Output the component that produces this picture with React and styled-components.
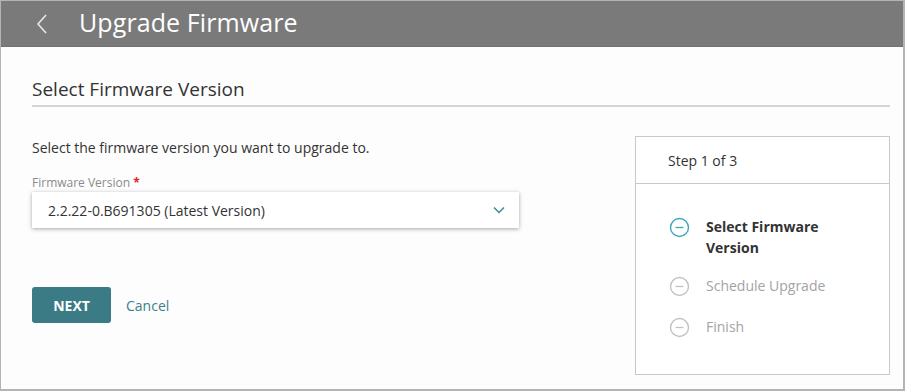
import React from "react";
import styled, { createGlobalStyle } from "styled-components";

const Global = createGlobalStyle`
  html, body { margin: 0; padding: 0; background: #fff; }
  body { font-family: "Open Sans", "Noto Sans", sans-serif; }
  * { box-sizing: border-box; }
`;

const Frame = styled.div`
  width: 905px;
  height: 391px;
  border: 1px solid #b4b4b4;
  border-right-width: 2px;
  border-bottom-width: 2px;
  background: #fdfdfd;
  display: flex;
  flex-direction: column;
  overflow: hidden;
`;

const Header = styled.header`
  height: 46px;
  background: #7a7a7a;
  border-bottom: 1px solid #717171;
  display: flex;
  align-items: center;
  padding-left: 34px;
  gap: 26px;
`;

const BackButton = styled.button`
  border: 0;
  background: none;
  padding: 0;
  width: 18px;
  height: 22px;
  display: flex;
  align-items: center;
  cursor: pointer;
`;

const Title = styled.h1`
  margin: 0;
  font-size: 25px;
  font-weight: 400;
  color: #fff;
  letter-spacing: 0.1px;
  line-height: 1;
  padding-bottom: 2px;
`;

const Body = styled.main`
  flex: 1;
  padding: 29px 13px 0 31px;
  display: flex;
  flex-direction: column;
`;

const SectionTitle = styled.h2`
  margin: 0;
  font-size: 19px;
  font-weight: 400;
  color: #333;
  line-height: 26px;
  padding-bottom: 3px;
  border-bottom: 2px solid #d4d4d4;
`;

const Content = styled.div`
  display: flex;
  justify-content: space-between;
  padding-top: 29px;
`;

const FormCol = styled.div`
  width: 488px;
  display: flex;
  flex-direction: column;
  padding-top: 2px;
`;

const Description = styled.p`
  margin: 0;
  font-size: 14px;
  color: #333;
  line-height: 20px;
`;

const Label = styled.label`
  margin-top: 17px;
  font-size: 12px;
  color: #8a8a8a;
  line-height: 16px;
`;

const Req = styled.span`
  color: #d9262b;
  font-weight: 700;
`;

const Select = styled.div`
  margin-top: 1px;
  height: 36px;
  width: 487px;
  background: #fff;
  box-shadow: 0 1px 4px rgba(0, 0, 0, 0.35);
  display: flex;
  align-items: center;
  justify-content: space-between;
  padding: 0 14px 0 16px;
  font-size: 14px;
  color: #333;
`;

const Actions = styled.div`
  margin-top: 59px;
  display: flex;
  align-items: center;
  gap: 15px;
`;

const NextButton = styled.button`
  width: 79px;
  height: 36px;
  border: 0;
  border-radius: 3px;
  background: #3a7b86;
  color: #fff;
  font-family: inherit;
  font-size: 14px;
  font-weight: 700;
  cursor: pointer;
`;

const CancelLink = styled.a`
  font-size: 14px;
  color: #3b7f8b;
  text-decoration: none;
`;

const StepPanel = styled.aside`
  width: 255px;
  height: 239px;
  border: 1px solid #c8c8c8;
  background: #fff;
  display: flex;
  flex-direction: column;
`;

const StepHeader = styled.div`
  height: 47px;
  border-bottom: 1px solid #c8c8c8;
  padding-left: 32px;
  display: flex;
  align-items: center;
  font-size: 14px;
  color: #333;
`;

const StepList = styled.ul`
  list-style: none;
  margin: 0;
  padding: 32px 0 0 33px;
  display: flex;
  flex-direction: column;
`;

const StepItem = styled.li`
  display: flex;
  align-items: flex-start;
  gap: 16px;
  min-height: 41px;
  padding-bottom: 17px;
  font-size: 14px;
  line-height: 21px;
  font-weight: ${(p) => (p.$active ? 700 : 400)};
  color: ${(p) => (p.$active ? "#333" : "#a3a3a3")};
`;

const StepText = styled.span`
  width: 130px;
`;

const StepIcon = ({ active }) => (
  <svg width="21" height="21" viewBox="0 0 21 21" style={{ flex: "none", marginTop: 1 }}>
    <circle cx="10.5" cy="10.5" r="9" fill="none" stroke={active ? "#3aa8b8" : "#c2c2c2"} strokeWidth="1.4" />
    <line x1="6.5" y1="10.5" x2="14.5" y2="10.5" stroke={active ? "#3aa8b8" : "#c2c2c2"} strokeWidth="1.3" />
  </svg>
);

export default function App() {
  return (
    <>
      <Global />
      <Frame>
        <Header>
          <BackButton aria-label="Back">
            <svg width="14" height="22" viewBox="0 0 14 22">
              <polyline points="11,2 3,11 11,20" fill="none" stroke="#e8e8e8" strokeWidth="1.6" />
            </svg>
          </BackButton>
          <Title>Upgrade Firmware</Title>
        </Header>
        <Body>
          <SectionTitle>Select Firmware Version</SectionTitle>
          <Content>
            <FormCol>
              <Description>Select the firmware version you want to upgrade to.</Description>
              <Label>
                Firmware Version <Req>*</Req>
              </Label>
              <Select>
                <span>2.2.22-0.B691305 (Latest Version)</span>
                <svg width="12" height="8" viewBox="0 0 12 8">
                  <polyline points="1,1.5 6,6.5 11,1.5" fill="none" stroke="#3a8896" strokeWidth="1.5" />
                </svg>
              </Select>
              <Actions>
                <NextButton>NEXT</NextButton>
                <CancelLink href="#">Cancel</CancelLink>
              </Actions>
            </FormCol>
            <StepPanel>
              <StepHeader>Step 1 of 3</StepHeader>
              <StepList>
                <StepItem $active>
                  <StepIcon active />
                  <StepText>Select Firmware Version</StepText>
                </StepItem>
                <StepItem>
                  <StepIcon />
                  <StepText>Schedule Upgrade</StepText>
                </StepItem>
                <StepItem>
                  <StepIcon />
                  <StepText>Finish</StepText>
                </StepItem>
              </StepList>
            </StepPanel>
          </Content>
        </Body>
      </Frame>
    </>
  );
}
